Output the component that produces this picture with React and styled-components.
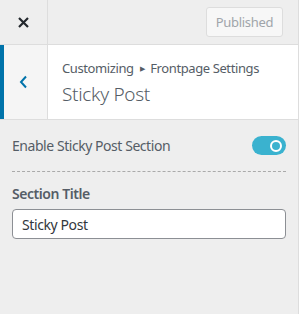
import React, { useState } from "react";
import styled, { createGlobalStyle } from "styled-components";

const GlobalStyle = createGlobalStyle`
	html, body {
		margin: 0;
		padding: 0;
		background: #eeeeee;
	}
	body {
		font-family: "Noto Sans", "Open Sans", sans-serif;
		color: #555d66;
	}
`;

const Panel = styled.div`
	width: 299px;
	height: 314px;
	background: #eeeeee;
	box-sizing: border-box;
	border-right: 1px solid #dddddd;
`;

const TopBar = styled.div`
	display: flex;
	align-items: center;
	height: 44px;
	border-bottom: 1px solid #dddddd;
	background: #eeeeee;
`;

const CloseButton = styled.button`
	width: 48px;
	height: 44px;
	display: flex;
	align-items: center;
	justify-content: center;
	background: transparent;
	border: none;
	border-right: 1px solid #dddddd;
	padding: 0;
	cursor: pointer;
	color: #23282d;
`;

const PublishButton = styled.button`
	margin-left: auto;
	margin-right: 15px;
	height: 30px;
	width: 77px;
	padding: 0;
	font-family: "Noto Sans", "Open Sans", sans-serif;
	font-size: 13px;
	letter-spacing: -0.3px;
	color: #a0a5aa;
	background: #f7f7f7;
	border: 1px solid #dddddd;
	border-radius: 3px;
	box-sizing: border-box;
`;

const SectionHeader = styled.div`
	display: flex;
	height: 74px;
	background: #ffffff;
	border-bottom: 1px solid #dddddd;
`;

const BackButton = styled.button`
	width: 48px;
	flex: none;
	display: flex;
	align-items: center;
	justify-content: center;
	background: #f5f5f5;
	border: none;
	border-left: 4px solid #0073aa;
	border-right: 1px solid #dddddd;
	padding: 0 4px 0 0;
	box-sizing: border-box;
	color: #0073aa;
`;

const Titles = styled.div`
	display: flex;
	flex-direction: column;
	justify-content: center;
	padding-left: 14px;
	gap: 4px;
`;

const Crumbs = styled.div`
	font-size: 13px;
	color: #555d66;
	line-height: 18px;
	letter-spacing: -0.4px;
`;

const Arrow = styled.span`
	font-size: 7px;
	margin: 0 6px;
	vertical-align: 2px;
`;

const Heading = styled.h3`
	margin: 0;
	font-size: 19px;
	font-weight: 300;
	line-height: 24px;
	letter-spacing: -0.3px;
	color: #555d66;
`;

const Content = styled.div`
	padding: 16px 12px;
`;

const ToggleRow = styled.div`
	display: flex;
	align-items: center;
	justify-content: space-between;
	padding: 0 0 16px;
	border-bottom: 1px dashed #aaaaaa;
`;

const Label = styled.span`
	font-size: 14px;
	line-height: 19px;
	color: #555d66;
	letter-spacing: -0.45px;
`;

const Toggle = styled.button`
	width: 34px;
	height: 19px;
	border-radius: 10px;
	border: none;
	padding: 0 4px;
	background: ${(p) => (p.$on ? "#3ab2cf" : "#cccccc")};
	display: flex;
	align-items: center;
	justify-content: ${(p) => (p.$on ? "flex-end" : "flex-start")};
	box-sizing: border-box;
	cursor: pointer;
`;

const Knob = styled.span`
	width: 8px;
	height: 8px;
	border: 2px solid #ffffff;
	border-radius: 50%;
`;

const Field = styled.div`
	padding-top: 12px;
`;

const FieldTitle = styled.div`
	font-size: 14px;
	line-height: 20px;
	font-weight: 600;
	color: #555d66;
	margin-bottom: 5px;
	letter-spacing: -0.45px;
`;

const TextInput = styled.input`
	width: 100%;
	height: 30px;
	box-sizing: border-box;
	border: 1px solid #8c8f94;
	border-radius: 4px;
	padding: 0 9px;
	font-family: "Noto Sans", "Open Sans", sans-serif;
	font-size: 14px;
	letter-spacing: -0.4px;
	color: #32373c;
	background: #ffffff;
	outline: none;
`;

export default function App() {
	const [on, setOn] = useState(true);
	const [title, setTitle] = useState("Sticky Post");
	return (
		<Panel>
			<GlobalStyle />
			<TopBar>
				<CloseButton aria-label="Close">
					<svg width="11" height="11" viewBox="0 0 11 11">
						<path d="M1 1L10 10M10 1L1 10" stroke="#23282d" strokeWidth="2.2" />
					</svg>
				</CloseButton>
				<PublishButton disabled>Published</PublishButton>
			</TopBar>
			<SectionHeader>
				<BackButton aria-label="Back">
					<svg width="9" height="14" viewBox="0 0 9 14">
						<path d="M7 1.5L2 7L7 12.5" fill="none" stroke="#0073aa" strokeWidth="2" />
					</svg>
				</BackButton>
				<Titles>
					<Crumbs>
						Customizing<Arrow>▶</Arrow>Frontpage Settings
					</Crumbs>
					<Heading>Sticky Post</Heading>
				</Titles>
			</SectionHeader>
			<Content>
				<ToggleRow>
					<Label>Enable Sticky Post Section</Label>
					<Toggle $on={on} onClick={() => setOn(!on)}>
						<Knob />
					</Toggle>
				</ToggleRow>
				<Field>
					<FieldTitle>Section Title</FieldTitle>
					<TextInput value={title} onChange={(e) => setTitle(e.target.value)} />
				</Field>
			</Content>
		</Panel>
	);
}
